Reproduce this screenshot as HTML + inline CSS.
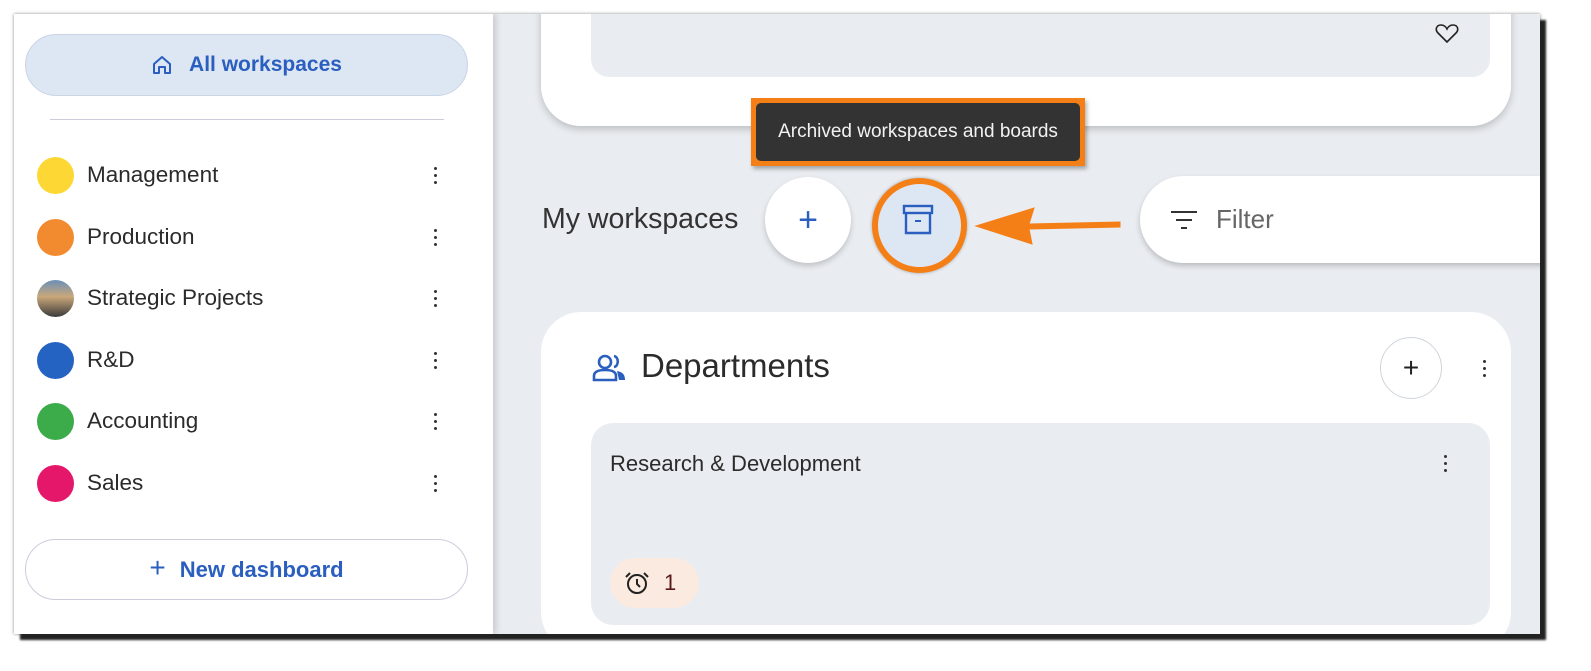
<!DOCTYPE html>
<html><head><style>
*{box-sizing:border-box;margin:0;padding:0}
html,body{width:1591px;height:671px;overflow:hidden}
body{background:#fff;font-family:"Liberation Sans",sans-serif;position:relative}
#frame{position:absolute;left:14px;top:14px;width:1526px;height:620px;overflow:hidden;background:#e9ecf0;box-shadow:6px 6px 2px #222,0 0 3px #888}
.abs{position:absolute}
#side{left:0;top:0;width:479px;height:620px;background:#fff;box-shadow:3px 0 6px rgba(0,0,0,.15)}
.pill{position:absolute;border-radius:31px;display:flex;align-items:center;justify-content:center;font-size:21px;font-weight:bold;color:#2a5fbf}
.item{position:absolute;left:23px;height:38px;display:flex;align-items:center;font-size:22.5px;color:#2b2b2b}
.dot{width:37px;height:37px;border-radius:50%;margin-right:13px}
.kebab{position:absolute;left:420px;width:4px}
.kebab i,.keb i{display:block;width:3px;height:3px;background:#333;border-radius:50%;margin-bottom:4px}
.card{background:#fff;border-radius:40px}
.circle{border-radius:50%;background:#fff;box-shadow:0 3px 6px rgba(0,0,0,.18)}
</style></head><body>
<div id="frame">
 <div id="side" class="abs">
  <div class="pill" style="left:11px;top:20px;width:443px;height:62px;background:#dde6f3;border:1px solid #c9d4e4">
   <svg width="22" height="22" viewBox="0 0 22 22" style="margin-right:16px"><path d="M3 10 L11 3 L19 10 V19 H14 V13 H8 V19 H3 Z" fill="none" stroke="#2a5fbf" stroke-width="2" stroke-linejoin="round"/></svg>All workspaces</div>
  <div class="abs" style="left:36px;top:105px;width:394px;height:1px;background:#ccd"></div>
  <div class="item" style="top:142px"><span class="dot" style="background:#fdd835"></span>Management</div>
  <div class="item" style="top:204px"><span class="dot" style="background:#f28b30"></span>Production</div>
  <div class="item" style="top:265px"><span class="dot" style="background:linear-gradient(180deg,#6b8fb8 0%,#c9a87a 45%,#3a3a3a 100%)"></span>Strategic Projects</div>
  <div class="item" style="top:327px"><span class="dot" style="background:#2563c2"></span>R&amp;D</div>
  <div class="item" style="top:388px"><span class="dot" style="background:#3cab4a"></span>Accounting</div>
  <div class="item" style="top:450px"><span class="dot" style="background:#e5176b"></span>Sales</div>
  <div class="kebab" style="top:153px"><i></i><i></i><i></i></div>
  <div class="kebab" style="top:215px"><i></i><i></i><i></i></div>
  <div class="kebab" style="top:276px"><i></i><i></i><i></i></div>
  <div class="kebab" style="top:338px"><i></i><i></i><i></i></div>
  <div class="kebab" style="top:399px"><i></i><i></i><i></i></div>
  <div class="kebab" style="top:461px"><i></i><i></i><i></i></div>
  <div class="pill" style="left:11px;top:525px;width:443px;height:61px;background:#fff;border:1px solid #ccd;font-size:22px">
   <span style="font-weight:normal;font-size:28px;margin-right:14px;margin-top:-4px">+</span>New dashboard</div>
 </div>
 <div class="abs card" style="left:527px;top:-60px;width:970px;height:172px;box-shadow:0 3px 8px rgba(0,0,0,.2)"></div>
 <div class="abs" style="left:577px;top:-20px;width:899px;height:83px;background:#e9ecf0;border-radius:18px"></div>
 <svg class="abs" style="left:1421px;top:8px" width="24" height="22" viewBox="0 0 24 22"><path d="M12 20 L3 11 C0 8 1 3 6 3 C9 3 11 5 12 7 C13 5 15 3 18 3 C23 3 24 8 21 11 Z" fill="none" stroke="#222" stroke-width="1.6"/></svg>
 <div class="abs" style="left:528px;top:189px;font-size:28.5px;color:#333">My workspaces</div>
 <div class="abs circle" style="left:751px;top:163px;width:86px;height:86px;display:flex;align-items:center;justify-content:center;color:#2a5fbf;font-size:34px">+</div>
 <div class="abs" style="left:858px;top:164px;width:95px;height:95px;border-radius:50%;border:6px solid #f57f17;background:#dde6f3;box-shadow:0 0 3px rgba(0,0,0,.3)"></div>
 <svg class="abs" style="left:888px;top:190px" width="32" height="32" viewBox="0 0 32 32"><rect x="2" y="2" width="28" height="7" fill="none" stroke="#2a5fbf" stroke-width="2.4"/><path d="M4 9 V29 H28 V9" fill="none" stroke="#2a5fbf" stroke-width="2.4"/><path d="M13 17 H19" stroke="#2a5fbf" stroke-width="2"/></svg>
 <svg class="abs" style="left:960px;top:188px" width="150" height="50" viewBox="0 0 150 50"><path d="M146 20 L55 22 L60 6 L2 24 L58 42 L55 27 L146 25 Z" fill="#f57f17" stroke="#f57f17" stroke-width="1"/></svg>
 <div class="abs" style="left:737px;top:84px;width:334px;height:68px;border:5px solid #f57f17;background:#f57f17;box-shadow:2px 3px 4px rgba(0,0,0,.3)">
  <div style="width:100%;height:100%;background:#333;border-radius:5px;color:#f2f2f2;font-size:19px;display:flex;align-items:center;justify-content:center">Archived workspaces and boards</div></div>
 <div class="abs" style="left:1126px;top:162px;width:450px;height:87px;background:#fff;border-radius:44px;box-shadow:0 3px 6px rgba(0,0,0,.2);display:flex;align-items:center;padding-left:30px;font-size:26px;color:#666">
  <svg width="28" height="22" viewBox="0 0 28 22" style="margin-right:18px"><path d="M1 3 H27 M6 11 H22 M11 19 H17" stroke="#333" stroke-width="2"/></svg>Filter</div>
 <div class="abs card" style="left:527px;top:298px;width:970px;height:340px"></div>
 <svg class="abs" style="left:578px;top:340px" width="36" height="28" viewBox="0 0 36 28"><circle cx="13" cy="8" r="6" fill="none" stroke="#2a5fbf" stroke-width="2.6"/><path d="M2 26 V22 C2 18 6 16 13 16 C20 16 24 18 24 22 V26 Z" fill="none" stroke="#2a5fbf" stroke-width="2.6"/><path d="M22 2 C27 3 27 12 22 13" fill="none" stroke="#2a5fbf" stroke-width="2.6"/><path d="M25 17 C31 18 33 21 33 26 H27 Z" fill="#2a5fbf"/></svg>
 <div class="abs" style="left:627px;top:333px;font-size:33px;color:#2b2b2b">Departments</div>
 <div class="abs" style="left:1366px;top:323px;width:62px;height:62px;border-radius:50%;border:1px solid #cfd5dc;display:flex;align-items:center;justify-content:center;font-size:28px;color:#222">+</div>
 <div class="abs keb" style="left:1469px;top:346px"><i></i><i></i><i></i></div>
 <div class="abs" style="left:577px;top:409px;width:899px;height:202px;background:#e9ecf0;border-radius:22px"></div>
 <div class="abs" style="left:596px;top:437px;font-size:22px;color:#2b2b2b">Research &amp; Development</div>
 <div class="abs keb" style="left:1430px;top:441px"><i></i><i></i><i></i></div>
 <div class="abs" style="left:596px;top:544px;width:89px;height:50px;border-radius:25px;background:#fbeadf;display:flex;align-items:center;padding-left:14px;font-size:22px;color:#5a1a1a">
  <svg width="26" height="26" viewBox="0 0 26 26" style="margin-right:14px"><circle cx="13" cy="14" r="9" fill="none" stroke="#222" stroke-width="2"/><path d="M13 9 V14 L16 17" fill="none" stroke="#222" stroke-width="2"/><path d="M2 7 L6 3 M24 7 L20 3" stroke="#222" stroke-width="2"/></svg>1</div>
</div>
</body></html>
